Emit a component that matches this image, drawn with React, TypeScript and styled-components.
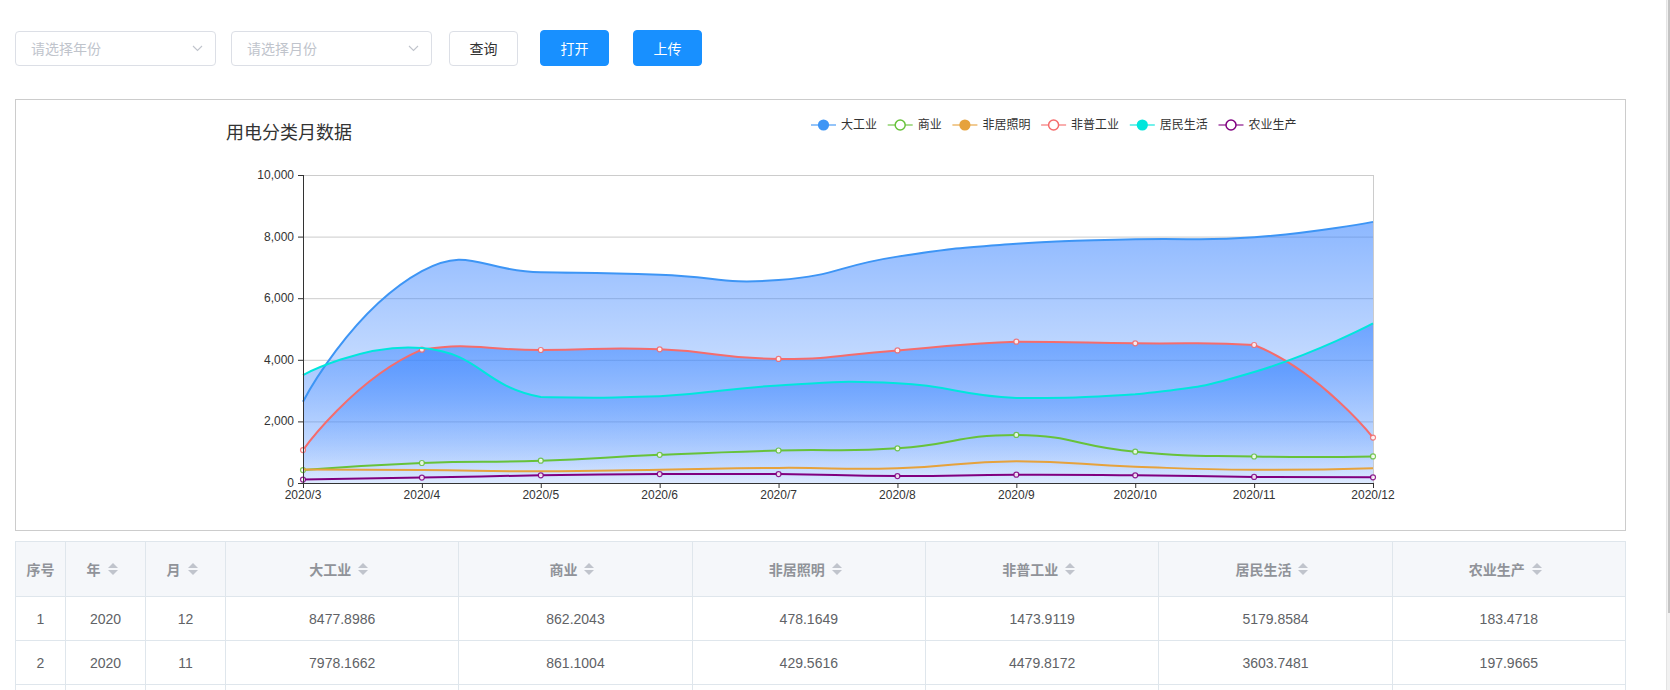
import React from 'react';
import styled, { createGlobalStyle } from 'styled-components';

const GlobalStyle = createGlobalStyle`
  html, body {
    margin: 0;
    padding: 0;
    background: #fff;
  }
  body {
    font-family: "Liberation Sans", "Noto Sans CJK SC", sans-serif;
    font-size: 14px;
    overflow: hidden;
  }
`;

const Shell = styled.div`
  display: flex;
  height: 690px;
  overflow: hidden;
`;

const Main = styled.div`
  flex: 1;
  min-width: 0;
  padding: 30px 40px 5px 15px;
`;

const ScrollTrack = styled.div`
  width: 4px;
  box-sizing: border-box;
  background: #f1f1f1;
  border-left: 1px solid #e4e4e4;
  display: flex;
  justify-content: flex-end;
`;

const ScrollThumb = styled.div`
  width: 2px;
  height: 613px;
  background: #c4c4c4;
`;

const Toolbar = styled.div`
  display: flex;
  align-items: center;
  height: 36px;
`;

const Select = styled.div<{ $gap: number }>`
  box-sizing: border-box;
  width: 201px;
  height: 35px;
  margin-right: ${p => p.$gap}px;
  border: 1px solid #dcdfe6;
  border-radius: 4px;
  padding: 0 12px 0 15px;
  display: flex;
  align-items: center;
  justify-content: space-between;
  color: #c0c4cc;
  font-size: 14px;
`;

const Button = styled.button<{ $primary?: boolean; $gap: number }>`
  box-sizing: border-box;
  width: 69px;
  height: ${p => (p.$primary ? 36 : 35)}px;
  margin: 0 ${p => p.$gap}px 0 0;
  padding: 0;
  border: 1px solid ${p => (p.$primary ? '#1890ff' : '#dcdfe6')};
  border-radius: 4px;
  background: ${p => (p.$primary ? '#1890ff' : '#fff')};
  color: ${p => (p.$primary ? '#fff' : '#333')};
  font-family: inherit;
  font-size: 14px;
`;

const Panel = styled.div`
  box-sizing: border-box;
  margin-top: 33px;
  height: 432px;
  border: 1px solid #ccc;
`;

const Table = styled.table`
  margin-top: 10px;
  width: 100%;
  border-collapse: collapse;
  table-layout: fixed;
`;

const Th = styled.th`
  height: 54px;
  padding: 0;
  background: #f5f7fa;
  border: 1px solid #dfe6ec;
  color: #909399;
  font-weight: bold;
  font-size: 14px;
  text-align: center;
  white-space: nowrap;
`;

const Td = styled.td`
  height: 43px;
  padding: 0;
  border: 1px solid #dfe6ec;
  color: #606266;
  font-size: 14px;
  text-align: center;
`;

const HeadInner = styled.span`
  display: inline-flex;
  align-items: center;
  vertical-align: middle;
`;

const Caret = styled.span`
  width: 24px;
  height: 34px;
  display: inline-flex;
  flex-direction: column;
  justify-content: center;
  gap: 2px;
  padding-left: 7px;
  box-sizing: border-box;
`;

const Tri = styled.i<{ $up?: boolean }>`
  width: 0;
  height: 0;
  border: 5px solid transparent;
  ${p => (p.$up ? 'border-bottom-color: #c0c4cc; border-top-width: 0;' : 'border-top-color: #c0c4cc; border-bottom-width: 0;')}
`;

type Series = { name: string; color: string; data: number[]; area: boolean; marker: boolean; hollow: boolean };

const months = ['2020/3', '2020/4', '2020/5', '2020/6', '2020/7', '2020/8', '2020/9', '2020/10', '2020/11', '2020/12'];

const series: Series[] = [
  { name: '大工业', color: '#3d95f5', area: true, marker: false, hollow: false,
    data: [2640, 6880, 6840, 6760, 6590, 7350, 7765, 7910, 7978.1662, 8477.8986] },
  { name: '商业', color: '#67c23a', area: false, marker: true, hollow: true,
    data: [420, 650, 725, 915, 1055, 1125, 1560, 1017, 861.1004, 862.2043] },
  { name: '非居照明', color: '#e6a23c', area: false, marker: false, hollow: false,
    data: [440, 420, 380, 430, 490, 480, 710, 530, 429.5616, 478.1649] },
  { name: '非普工业', color: '#f56c6c', area: true, marker: true, hollow: true,
    data: [1070, 4330, 4318, 4340, 4030, 4305, 4590, 4535, 4479.8172, 1473.9119] },
  { name: '居民生活', color: '#00e6dc', area: true, marker: false, hollow: false,
    data: [3506, 4380, 2790, 2820, 3165, 3235, 2760, 2880, 3603.7481, 5179.8584] },
  { name: '农业生产', color: '#800080', area: false, marker: true, hollow: true,
    data: [110, 175, 250, 290, 290, 225, 270, 250, 197.9665, 183.4718] },
];

const X0 = 287;
const X1 = 1357;
const Y0 = 75;
const Y1 = 383;
const px = (i: number) => X0 + (i * (X1 - X0)) / 9;
const py = (v: number) => Y1 - (v / 10000) * (Y1 - Y0);

// smooth curve with control points kept inside the points' bounding box
function smoothPath(pts: [number, number][], s = 0.5) {
  const n = pts.length;
  const xs = pts.map(p => p[0]);
  const ys = pts.map(p => p[1]);
  const minX = Math.min(...xs), maxX = Math.max(...xs);
  const minY = Math.min(...ys), maxY = Math.max(...ys);
  const clamp = (p: [number, number]): [number, number] => [
    Math.min(maxX, Math.max(minX, p[0])),
    Math.min(maxY, Math.max(minY, p[1])),
  ];
  const cin: [number, number][] = [];
  const cout: [number, number][] = [];
  for (let i = 0; i < n; i++) {
    const cur = pts[i];
    if (i === 0 || i === n - 1) {
      cin.push(cur);
      cout.push(cur);
      continue;
    }
    const prev = pts[i - 1];
    const next = pts[i + 1];
    const vx = (next[0] - prev[0]) * s;
    const vy = (next[1] - prev[1]) * s;
    const d0 = Math.hypot(cur[0] - prev[0], cur[1] - prev[1]);
    const d1 = Math.hypot(next[0] - cur[0], next[1] - cur[1]);
    const sum = d0 + d1 || 1;
    cin.push(clamp([cur[0] - vx * (d0 / sum), cur[1] - vy * (d0 / sum)]));
    cout.push(clamp([cur[0] + vx * (d1 / sum), cur[1] + vy * (d1 / sum)]));
  }
  let d = `M${pts[0][0]},${pts[0][1]}`;
  for (let i = 1; i < n; i++) {
    d += ` C${cout[i - 1][0]},${cout[i - 1][1]} ${cin[i][0]},${cin[i][1]} ${pts[i][0]},${pts[i][1]}`;
  }
  return d;
}

const legendWidths = [36, 24, 48, 48, 48, 48];

function Chart() {
  const font = '"Liberation Sans", "Noto Sans CJK SC", sans-serif';
  let lx = 795;
  const legend = series.map((s, i) => {
    const x = lx;
    lx += 25 + 5 + legendWidths[i] + 10.7;
    return (
      <g key={s.name}>
        <line x1={x} y1={25} x2={x + 25} y2={25} stroke={s.color} strokeWidth={2} opacity={0.55} />
        {s.hollow ? (
          <circle cx={x + 12.5} cy={25} r={5} fill="#fff" stroke={s.color} strokeWidth={1.5} />
        ) : (
          <circle cx={x + 12.5} cy={25} r={5.6} fill={s.color} />
        )}
        <text x={x + 30} y={25} fontSize={12} fill="#333" dominantBaseline="central">{s.name}</text>
      </g>
    );
  });

  return (
    <svg width="1609" height="430" viewBox="0 0 1609 430" fontFamily={font}>
      <defs>
        <linearGradient id="areaGrad" x1="0" y1="0" x2="0" y2="1">
          <stop offset="0" stopColor="#3a84ff" stopOpacity={0.58} />
          <stop offset="1" stopColor="#3a84ff" stopOpacity={0.06} />
        </linearGradient>
      </defs>
      <text x={210} y={33} fontSize={18} fill="#333" dominantBaseline="central">用电分类月数据</text>
      {legend}
      {[0, 2000, 4000, 6000, 8000, 10000].map(v => (
        <g key={v}>
          <line x1={X0} x2={X1} y1={py(v) + 0.5} y2={py(v) + 0.5} stroke="#ccc" />
          <line x1={X0 - 5} x2={X0} y1={py(v) + 0.5} y2={py(v) + 0.5} stroke="#333" />
          <text x={X0 - 9} y={py(v)} fontSize={12} fill="#333" textAnchor="end" dominantBaseline="central">
            {v.toLocaleString('en-US')}
          </text>
        </g>
      ))}
      <line x1={X1 + 0.5} x2={X1 + 0.5} y1={Y0} y2={Y1} stroke="#ccc" />
      {series.filter(s => s.area).map(s => {
        const pts = s.data.map((v, i) => [px(i), py(v)] as [number, number]);
        return (
          <path key={s.name + 'a'} d={`${smoothPath(pts)} L${X1},${Y1} L${X0},${Y1} Z`} fill="url(#areaGrad)" />
        );
      })}
      {series.map(s => {
        const pts = s.data.map((v, i) => [px(i), py(v)] as [number, number]);
        return (
          <g key={s.name}>
            <path d={smoothPath(pts)} fill="none" stroke={s.color} strokeWidth={2} />
            {s.marker && pts.map((p, i) => (
              <circle key={i} cx={p[0]} cy={p[1]} r={2.5} fill="#fff" stroke={s.color} strokeWidth={1.2} opacity={0.85} />
            ))}
          </g>
        );
      })}
      <line x1={X0 + 0.5} x2={X0 + 0.5} y1={Y0} y2={Y1 + 0.5} stroke="#333" />
      <line x1={X0} x2={X1 + 1} y1={Y1 + 0.5} y2={Y1 + 0.5} stroke="#333" />
      {months.map((m, i) => (
        <g key={m}>
          <line x1={px(i) + 0.5} x2={px(i) + 0.5} y1={Y1} y2={Y1 + 5} stroke="#333" />
          <text x={px(i)} y={Y1 + 12} fontSize={12} fill="#333" textAnchor="middle" dominantBaseline="central">{m}</text>
        </g>
      ))}
    </svg>
  );
}

function Chevron() {
  return (
    <svg width="11" height="7" viewBox="0 0 11 7">
      <polyline points="1,1 5.5,5.5 10,1" fill="none" stroke="#c0c4cc" strokeWidth="1.1" />
    </svg>
  );
}

const columns = [
  { title: '序号', width: 50, sort: false },
  { title: '年', width: 80, sort: true },
  { title: '月', width: 80, sort: true },
  { title: '大工业', sort: true },
  { title: '商业', sort: true },
  { title: '非居照明', sort: true },
  { title: '非普工业', sort: true },
  { title: '居民生活', sort: true },
  { title: '农业生产', sort: true },
];

const rows = [
  ['1', '2020', '12', '8477.8986', '862.2043', '478.1649', '1473.9119', '5179.8584', '183.4718'],
  ['2', '2020', '11', '7978.1662', '861.1004', '429.5616', '4479.8172', '3603.7481', '197.9665'],
  ['3', '2020', '10', '7910.3325', '1017.4410', '530.2287', '4535.1962', '2880.5527', '250.1836'],
  ['4', '2020', '9', '7765.0941', '1560.7183', '710.6632', '4590.4418', '2760.3075', '270.5504'],
];

export default function App() {
  return (
    <Shell>
      <GlobalStyle />
      <Main>
        <Toolbar>
          <Select $gap={15}>
            <span>请选择年份</span>
            <Chevron />
          </Select>
          <Select $gap={17}>
            <span>请选择月份</span>
            <Chevron />
          </Select>
          <Button $gap={22}>查询</Button>
          <Button $primary $gap={24}>打开</Button>
          <Button $primary $gap={0}>上传</Button>
        </Toolbar>
        <Panel>
          <Chart />
        </Panel>
        <Table>
          <colgroup>
            {columns.map(c => <col key={c.title} style={c.width ? { width: c.width } : undefined} />)}
          </colgroup>
          <thead>
            <tr>
              {columns.map(c => (
                <Th key={c.title}>
                  <HeadInner>
                    {c.title}
                    {c.sort && (
                      <Caret>
                        <Tri $up />
                        <Tri />
                      </Caret>
                    )}
                  </HeadInner>
                </Th>
              ))}
            </tr>
          </thead>
          <tbody>
            {rows.map(r => (
              <tr key={r[0]}>
                {r.map((v, i) => <Td key={i}>{v}</Td>)}
              </tr>
            ))}
          </tbody>
        </Table>
      </Main>
      <ScrollTrack>
        <ScrollThumb />
      </ScrollTrack>
    </Shell>
  );
}
